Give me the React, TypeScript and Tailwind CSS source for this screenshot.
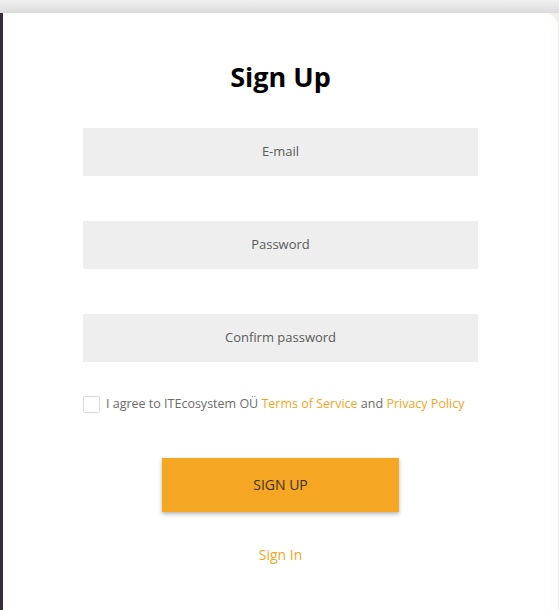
import React from 'react';

const fields = ['E-mail', 'Password', 'Confirm password'];

const App: React.FC = () => {
  return (
    <div className="h-[610px] w-[559px] overflow-hidden bg-[#f3f1ec] flex flex-col" style={{ fontFamily: '"Open Sans", sans-serif' }}>
      {/* top shadow band */}
      <div className="h-[13px] shrink-0 bg-gradient-to-b from-[#f0f0f0] to-[#dcdcdc]" />
      <div className="flex flex-1">
        <div className="w-[3px] bg-[#3a2e3a]" />
        <div className="flex-1 bg-white rounded-tr-[14px] flex flex-col items-center pt-[47px]">
          <h1 className="text-[27px] leading-[34px] font-bold text-black">Sign Up</h1>

          <div className="mt-[34px] flex flex-col gap-[45px]">
            {fields.map((f) => (
              <input
                key={f}
                placeholder={f}
                className="w-[395px] h-[48px] pb-[2px] bg-[#eeeeee] text-center text-[13px] text-[#555] placeholder:text-[#5a5a5a] outline-none"
              />
            ))}
          </div>

          <label className="mt-[33px] w-[395px] flex items-center gap-[6px] text-[12.5px] text-[#6b6b6b]">
            <span className="w-[17px] h-[17px] border border-[#dcdcdc] rounded-[2px] bg-white shrink-0" />
            <span>
              I agree to ITEcosystem OÜ <a className="text-[#f5a623]">Terms of Service</a> and{' '}
              <a className="text-[#f5a623]">Privacy Policy</a>
            </span>
          </label>

          <button className="mt-[44px] w-[237px] h-[54px] bg-[#f5a623] text-[14px] text-[#3d3320] uppercase shadow-[0_2px_4px_rgba(0,0,0,0.3)]">
            Sign Up
          </button>

          <a className="mt-[32px] text-[14px] text-[#f5a623]">Sign In</a>
        </div>
        <div className="w-[1px] bg-[#eeeae2]" />
      </div>
    </div>
  );
};

export default App;
